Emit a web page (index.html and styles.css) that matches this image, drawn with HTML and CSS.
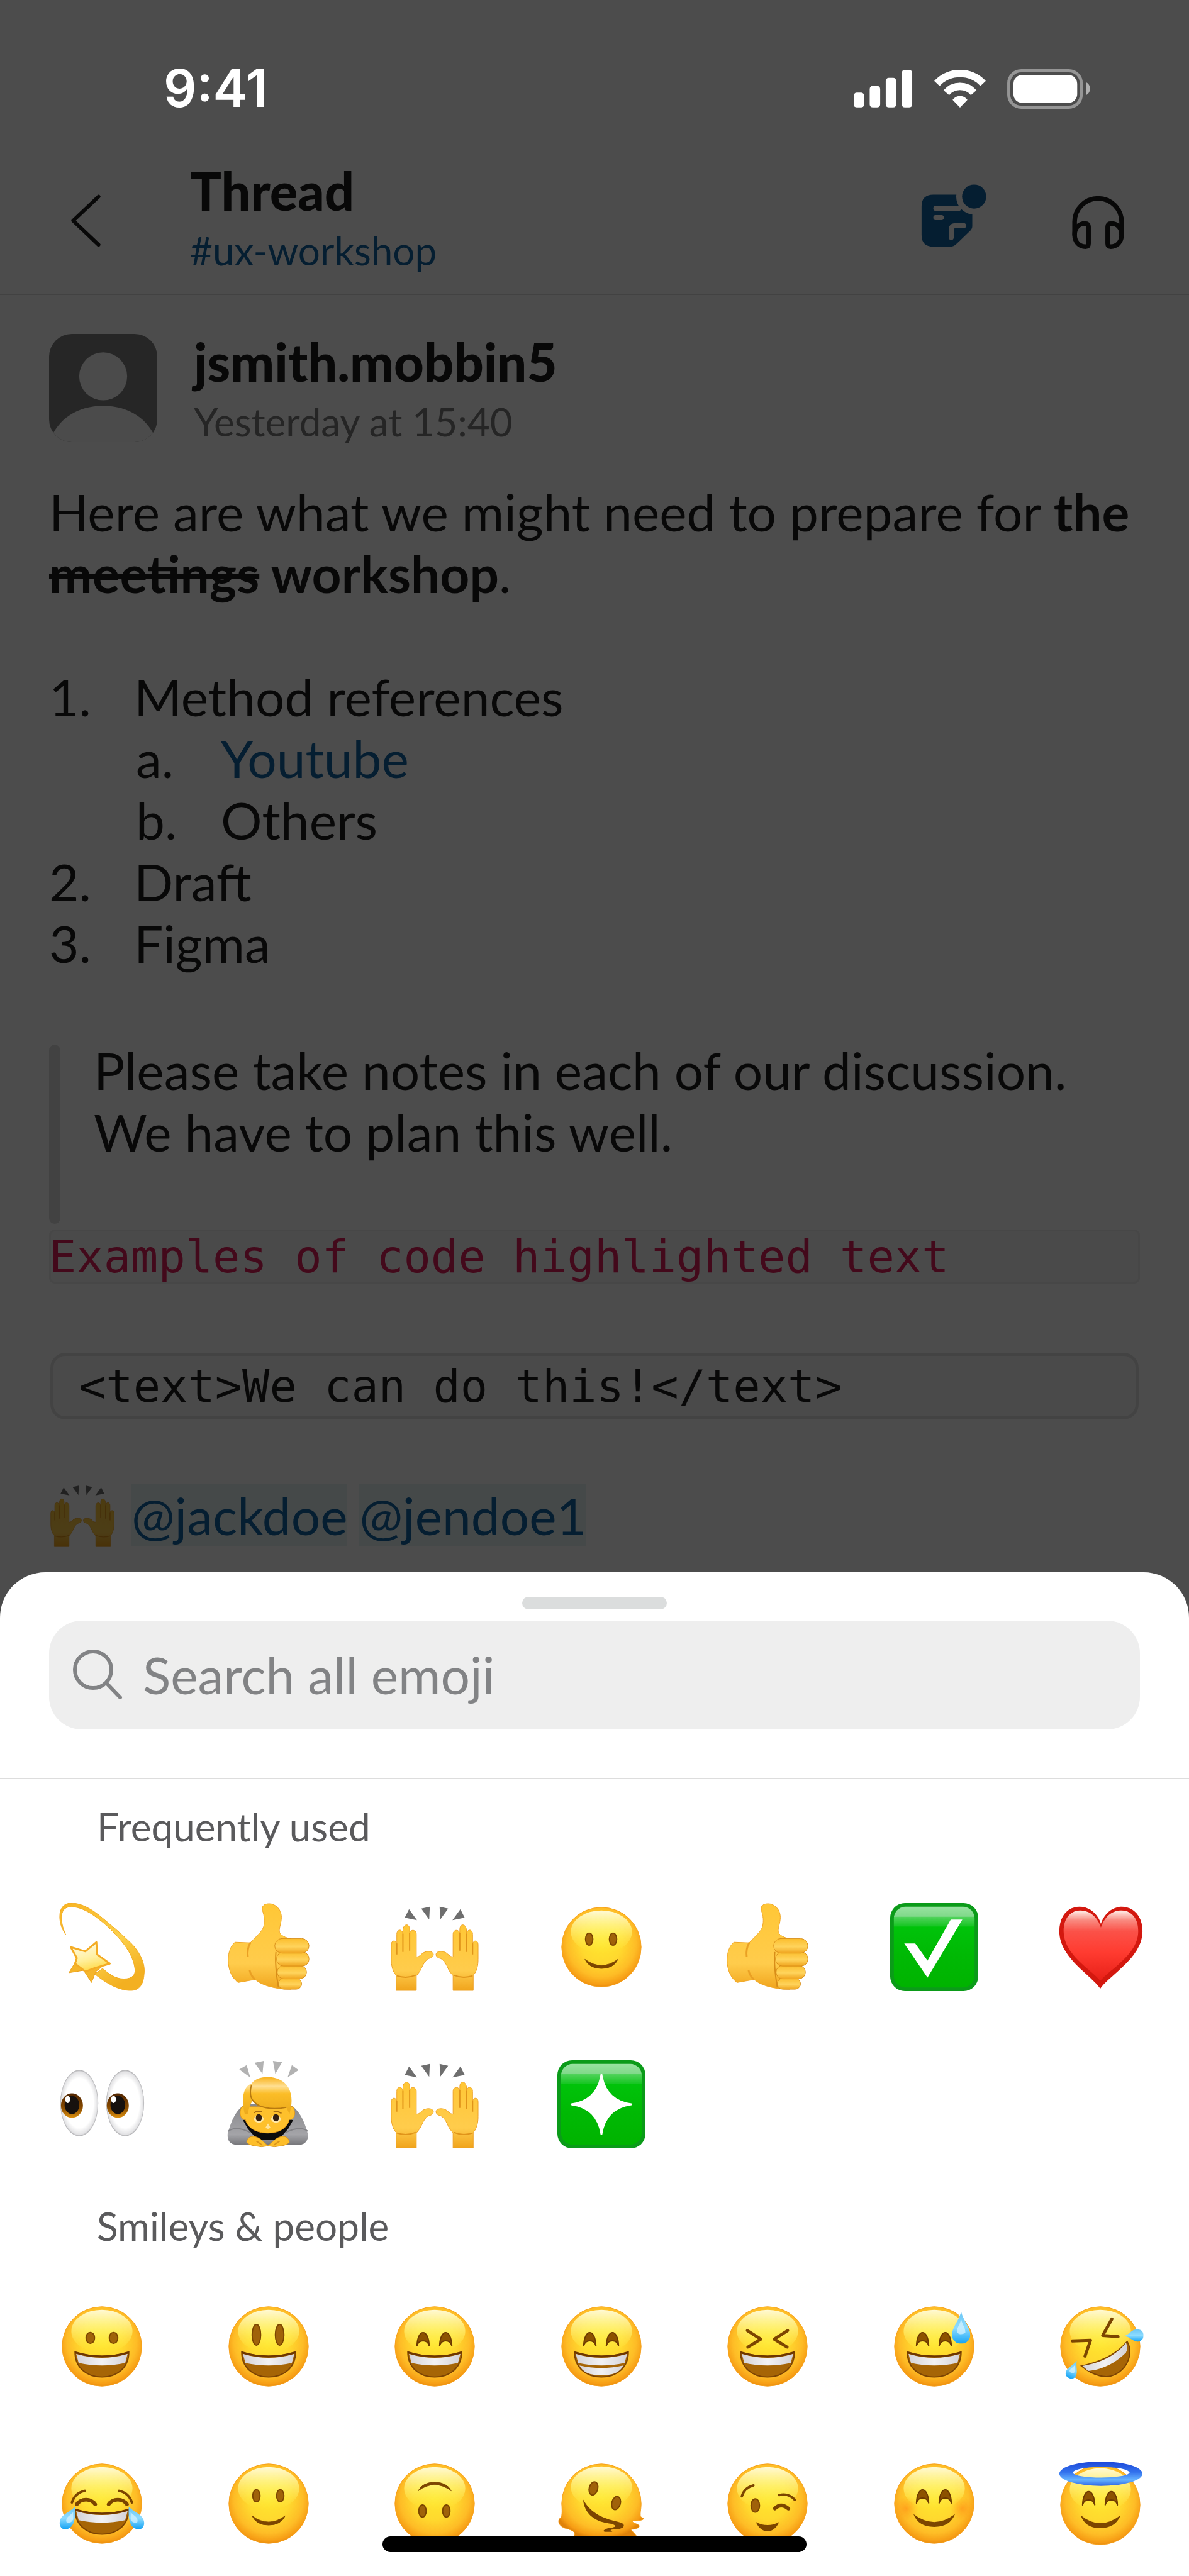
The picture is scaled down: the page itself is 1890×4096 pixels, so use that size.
FILE: index.html
```html
<!DOCTYPE html>
<html lang="en">
<head>
    <meta charset="UTF-8">
    <meta name="viewport" content="width=device-width, initial-scale=1.0">
    <title>Thread</title>
    <link rel="stylesheet" href="styles.css">
</head>
<body>

<!-- Shared emoji artwork -->
<svg class="sprite" aria-hidden="true">
    <defs>
        <radialGradient id="skin" cx="0.5" cy="0.44" r="0.58">
            <stop offset="0" stop-color="#ffe62e"/>
            <stop offset="0.45" stop-color="#ffd92e"/>
            <stop offset="0.75" stop-color="#febc26"/>
            <stop offset="0.92" stop-color="#f69c14"/>
            <stop offset="1" stop-color="#e0820a"/>
        </radialGradient>
        <linearGradient id="gloss" x1="0" y1="0" x2="0" y2="1">
            <stop offset="0" stop-color="#fffde0" stop-opacity="0.95"/>
            <stop offset="0.5" stop-color="#fffa80" stop-opacity="0.6"/>
            <stop offset="1" stop-color="#fff040" stop-opacity="0"/>
        </linearGradient>
        <linearGradient id="teeth" x1="0" y1="0" x2="1" y2="0">
            <stop offset="0" stop-color="#d4d2d6"/>
            <stop offset="0.5" stop-color="#f2f2f4"/>
            <stop offset="1" stop-color="#d4d2d6"/>
        </linearGradient>
        <linearGradient id="water" x1="0" y1="0" x2="0" y2="1">
            <stop offset="0" stop-color="#6cc6f5"/>
            <stop offset="0.5" stop-color="#8edcff"/>
            <stop offset="1" stop-color="#12a2f4"/>
        </linearGradient>
        <radialGradient id="cheek">
            <stop offset="0" stop-color="#ff8a14" stop-opacity="0.6"/>
            <stop offset="1" stop-color="#ff9a14" stop-opacity="0"/>
        </radialGradient>
        <linearGradient id="hand" x1="0" y1="0" x2="0" y2="1">
            <stop offset="0" stop-color="#ffc736"/>
            <stop offset="0.7" stop-color="#ffcc4c"/>
            <stop offset="1" stop-color="#f0a41c"/>
        </linearGradient>
        <linearGradient id="finger" x1="0" y1="0" x2="0" y2="1">
            <stop offset="0" stop-color="#fbbd2c"/>
            <stop offset="0.55" stop-color="#ffd45c"/>
            <stop offset="1" stop-color="#f0a51f"/>
        </linearGradient>
        <linearGradient id="green" x1="0" y1="0" x2="0" y2="1">
            <stop offset="0" stop-color="#98e2a0"/>
            <stop offset="0.12" stop-color="#80d98a"/>
            <stop offset="0.13" stop-color="#4fd25a"/>
            <stop offset="0.24" stop-color="#18c624"/>
            <stop offset="0.25" stop-color="#00c30a"/>
            <stop offset="0.6" stop-color="#00b904"/>
            <stop offset="1" stop-color="#00b300"/>
        </linearGradient>
        <linearGradient id="heart" x1="0" y1="0" x2="0" y2="1">
            <stop offset="0" stop-color="#fff0ea"/>
            <stop offset="0.14" stop-color="#f98a80"/>
            <stop offset="0.3" stop-color="#fb5148"/>
            <stop offset="0.6" stop-color="#ff3b30"/>
            <stop offset="1" stop-color="#e82018"/>
        </linearGradient>
        <linearGradient id="trail" x1="0" y1="0" x2="0.6" y2="1">
            <stop offset="0" stop-color="#f8b422"/>
            <stop offset="0.6" stop-color="#fcd04a"/>
            <stop offset="1" stop-color="#f3b021"/>
        </linearGradient>
        <linearGradient id="star" x1="0.3" y1="0" x2="0.6" y2="1">
            <stop offset="0" stop-color="#fffbe6"/>
            <stop offset="0.55" stop-color="#fff0a0"/>
            <stop offset="1" stop-color="#ffd840"/>
        </linearGradient>
        <linearGradient id="hair" x1="0" y1="0" x2="0" y2="1">
            <stop offset="0" stop-color="#f9b21a"/>
            <stop offset="0.25" stop-color="#ffdf92"/>
            <stop offset="0.45" stop-color="#fbbd27"/>
            <stop offset="1" stop-color="#eba91c"/>
        </linearGradient>
        <linearGradient id="sleeve" x1="0" y1="0" x2="0" y2="1">
            <stop offset="0" stop-color="#88888b"/>
            <stop offset="0.75" stop-color="#a4a4a8"/>
            <stop offset="1" stop-color="#77777b"/>
        </linearGradient>
        <linearGradient id="halo" x1="0" y1="0" x2="0" y2="1">
            <stop offset="0" stop-color="#1c46d8"/>
            <stop offset="0.45" stop-color="#3474ee"/>
            <stop offset="0.75" stop-color="#66b4ff"/>
            <stop offset="1" stop-color="#2c62e4"/>
        </linearGradient>
        <radialGradient id="eyeball">
            <stop offset="0.75" stop-color="#ffffff"/>
            <stop offset="0.95" stop-color="#e2e2e4"/>
            <stop offset="1" stop-color="#a9a9ac"/>
        </radialGradient>
        <linearGradient id="iris" x1="0" y1="0" x2="0" y2="1">
            <stop offset="0" stop-color="#512500"/>
            <stop offset="0.6" stop-color="#8a4c00"/>
            <stop offset="1" stop-color="#dc9010"/>
        </linearGradient>
    </defs>

    <symbol id="face" viewBox="0 0 144 144">
        <circle cx="72" cy="72" r="65" fill="url(#skin)" stroke="#f6a01c" stroke-width="1"/>
        <ellipse cx="72" cy="47" rx="50" ry="35" fill="url(#gloss)"/>
    </symbol>
    <symbol id="mouth-open" viewBox="0 0 144 144">
        <path d="M28 81Q72 95 116 81C116 106 98 122 72 122S28 106 28 81Z" fill="#a66506" stroke="#7c4303" stroke-width="2"/>
        <path d="M30 84Q72 97 114 84L110 99Q72 107 34 99Z" fill="url(#teeth)"/>
        <path d="M28 82Q72 95 116 82" fill="none" stroke="#6d3600" stroke-width="3"/>
    </symbol>
    <symbol id="eyes-smile" viewBox="0 0 144 144">
        <g fill="#8c5200" stroke="#6d3a00" stroke-width="2" stroke-linejoin="round">
            <path d="M43 71C44 42 62 42 63 71C60 60 46 60 43 71Z"/>
            <path d="M80 71C81 42 99 42 100 71C97 60 83 60 80 71Z"/>
        </g>
    </symbol>
    <symbol id="drop" viewBox="0 0 30 52">
        <path d="M15 0C18 14 30 26 30 38A14 14 0 0 1 0 38C0 26 12 14 15 0Z" fill="url(#water)"/>
        <path d="M15 12C17 22 22 26 22 34Q15 40 8 34C8 26 13 22 15 12Z" fill="#d4f2ff" opacity="0.75"/>
    </symbol>
    <symbol id="slight-smile" viewBox="0 0 144 144">
        <use href="#face"/>
        <g fill="#a0620a" stroke="#7c4500" stroke-width="2">
            <ellipse cx="52" cy="59" rx="6" ry="10"/>
            <ellipse cx="91" cy="59" rx="6" ry="10"/>
        </g>
        <path d="M45 92Q72 112 99 92Q92 107 72 107T45 92Z" fill="#7c4500" stroke="#7c4500" stroke-width="1" stroke-linejoin="round"/>
    </symbol>
    <symbol id="palm" viewBox="0 0 144 144">
        <path d="M9 143V118C3 112 1 102 1 92L1 68C1 60 9 60 10 67V51C10 42 19 42 20 50V44C21 33 31 33 31 43V50C32 42 42 43 42 51V88C44 88 47 87 49 85C54 79 62 78 67 80C72 83 70 88 65 90C58 91 54 99 51 105C49 111 45 115 42 119V143Z" fill="url(#hand)" stroke="#eda022" stroke-width="1"/>
        <path d="M10 66V84M20 50V80M31 49V78M10 119Q26 124 41 118" fill="none" stroke="#e0941a" stroke-width="2"/>
        <path d="M30 10L23 24L43 28ZM50 9L64 6L63 27Z" fill="#6e6e6e"/>
    </symbol>
    <symbol id="raised-hands" viewBox="0 0 144 144">
        <use href="#palm"/>
        <use href="#palm" transform="translate(144 0) scale(-1 1)"/>
    </symbol>
    <symbol id="thumbs-up" viewBox="0 0 144 144">
        <path d="M73 1C83 1 93 10 93 23C93 34 88 42 90 48C92 53 100 57 108 58V141C92 141 65 138 50 125L22 130C12 122 6 110 6 93C6 80 10 70 17 64L42 65C52 54 62 46 64 38C66 28 65 22 62 12C60 4 66 1 73 1Z" fill="url(#hand)" stroke="#f0a422" stroke-width="1"/>
        <path d="M42 65C38 72 37 80 38 88M50 125Q43 119 41 110" fill="none" stroke="#eaa024" stroke-width="3"/>
        <g fill="url(#finger)" stroke="#d88d18" stroke-width="1">
            <rect x="88" y="123" width="38" height="18" rx="9"/>
            <rect x="86" y="102" width="48" height="22" rx="11"/>
            <rect x="85" y="80" width="53" height="23" rx="11"/>
            <rect x="82" y="58" width="56" height="24" rx="12"/>
        </g>
        <path d="M84 80C82 100 85 120 88 138" fill="none" stroke="#d88d18" stroke-width="2"/>
    </symbol>
    <symbol id="green-tile" viewBox="0 0 144 144">
        <rect width="144" height="144" rx="24" fill="#0b9b19"/>
        <rect x="6" y="6" width="132" height="132" rx="19" fill="url(#green)"/>
    </symbol>
</svg>

<main class="phone">
    <section class="thread">
        <div class="status-bar">
            <time class="clock">9:41</time>
            <div class="status-icons">
                <svg width="94" height="60" viewBox="0 0 96 61" fill="#fff">
                    <rect x="0" y="37" width="17" height="24" rx="5"/>
                    <rect x="26" y="26" width="17" height="35" rx="5"/>
                    <rect x="52" y="13" width="17" height="48" rx="5"/>
                    <rect x="78" y="0" width="17" height="61" rx="5"/>
                </svg>
                <svg width="82" height="60" viewBox="0 0 83 61" fill="none" stroke="#fff" stroke-width="12">
                    <path d="M4.2 22.1A51.3 51.3 0 0 1 78.8 22.1"/>
                    <path d="M19.4 36.9A29.1 29.1 0 0 1 63.6 36.9"/>
                    <path d="M41.5 61L29.5 48.5C36 40 47 40 53.5 48.5Z" fill="#fff" stroke="none"/>
                </svg>
                <svg width="132" height="63" viewBox="0 0 134 64">
                    <rect x="2.5" y="2.5" width="117" height="59" rx="20" fill="none" stroke="#959595" stroke-width="5"/>
                    <rect x="10" y="9.5" width="103" height="45" rx="14" fill="#fff"/>
                    <path d="M127 21C136 25 136 38 127 42Z" fill="#b0b0b0"/>
                </svg>
            </div>
        </div>

        <header class="thread-header">
            <button class="icon-button" aria-label="Back">
                <svg viewBox="0 0 120 120"><path d="M80 27L39 66L80 105" fill="none" stroke="#1d1c1d" stroke-width="6" stroke-linecap="round" stroke-linejoin="round"/></svg>
            </button>
            <div class="thread-title">
                <h1>Thread</h1>
                <a href="#">#ux-workshop</a>
            </div>
            <div class="thread-actions">
                <button class="icon-button" aria-label="Canvas">
                    <svg viewBox="0 0 120 120">
                        <path d="M27 24H90V75Q90 79 86 83L64 104Q60 108 54 108H27Q8 108 8 89V43Q8 24 27 24Z" fill="#1264a3"/>
                        <circle cx="93" cy="27" r="29" fill="#fff"/>
                        <circle cx="93" cy="27" r="19.5" fill="#1264a3"/>
                        <path d="M31 46H68M31 61H40M56 93V81Q56 74 63 74H76" fill="none" stroke="#fff" stroke-width="8" stroke-linecap="round"/>
                    </svg>
                </button>
                <button class="icon-button" aria-label="Start a huddle">
                    <svg viewBox="0 0 120 120">
                        <g fill="none" stroke="#1d1c1d" stroke-width="7.5">
                            <path d="M21.5 90V68A38 38 0 0 1 97.5 68V90"/>
                            <path d="M21.5 89C21.5 77 29 70.5 38 70.5Q44 70.5 44 76V103Q44 108 39 108C29 108 21.5 100 21.5 89Z"/>
                            <path d="M97.5 89C97.5 77 90 70.5 81 70.5Q75 70.5 75 76V103Q75 108 80 108C90 108 97.5 100 97.5 89Z"/>
                        </g>
                    </svg>
                </button>
            </div>
        </header>

        <article class="message">
            <div class="author">
                <svg class="avatar" viewBox="0 0 176 176">
                    <rect width="176" height="176" fill="#7f7f7f"/>
                    <circle cx="88" cy="69" r="39" fill="#fafafa"/>
                    <path d="M0 176C14 138 46 117 88 117S162 138 176 176Z" fill="#fafafa"/>
                </svg>
                <div>
                    <h2>jsmith.mobbin5</h2>
                    <p class="sent-at">Yesterday at 15:40</p>
                </div>
            </div>

            <p class="text">Here are what we might need to prepare for <b>the <s>meetings</s> workshop</b>.</p>

            <ol class="list">
                <li>Method references
                    <ol class="sublist">
                        <li><a href="#">Youtube</a></li>
                        <li>Others</li>
                    </ol>
                </li>
                <li>Draft</li>
                <li>Figma</li>
            </ol>

            <blockquote>Please take notes in each of our discussion.<br>We have to plan this well.</blockquote>

            <code class="inline-code">Examples of code highlighted text</code>

            <pre class="code-block">&lt;text&gt;We can do this!&lt;/text&gt;</pre>

            <div class="mentions">
                <svg class="emoji-inline" viewBox="0 0 144 144"><use href="#raised-hands"/></svg>
                <a href="#">@jackdoe</a>
                <a href="#">@jendoe1</a>
            </div>
        </article>
    </section>

    <section class="sheet">
        <div class="handle"></div>
        <label class="search">
            <svg viewBox="0 0 80 80" fill="none" stroke="#828385" stroke-width="6" stroke-linecap="round">
                <circle cx="33" cy="33" r="29"/>
                <path d="M54 54L76 77"/>
            </svg>
            <input type="text" placeholder="Search all emoji" aria-label="Search all emoji">
        </label>

        <div class="picker">
            <h3>Frequently used</h3>
            <div class="emoji-grid">
                <button aria-label="dizzy">
                    <svg viewBox="0 0 144 144">
                        <path d="M13 52C6 42 3 32 3 22C3 8 10 0 22 0C38 0 54 9 70 22C92 40 110 56 122 68C136 84 143 100 141 116C140 132 134 143 119 143C98 143 78 130 60 116L73 107C84 116 94 124 108 124C122 124 127 117 126 108C124 90 114 74 102 60C92 48 80 36 65 25C50 13 34 6 22 6C10 6 6 14 6 24C6 34 9 43 13 52Z" fill="url(#trail)" stroke="#f2a81c" stroke-width="1"/>
                        <path d="M29 96L18 114L42 110L55 130L62 112L80 98L62 90Z" fill="#f5b52a" stroke="#e9a01c" stroke-width="1" stroke-linejoin="round"/>
                        <path d="M63 64L64 84L85 99L61 106L45 112L28 99L31 90L21 72L45 79Z" fill="url(#star)" stroke="#f4ac24" stroke-width="3" stroke-linejoin="round"/>
                    </svg>
                </button>
                <button aria-label="thumbs up"><svg viewBox="0 0 144 144"><use href="#thumbs-up"/></svg></button>
                <button aria-label="raised hands"><svg viewBox="0 0 144 144"><use href="#raised-hands"/></svg></button>
                <button aria-label="slightly smiling face"><svg viewBox="0 0 144 144"><use href="#slight-smile"/></svg></button>
                <button aria-label="thumbs up"><svg viewBox="0 0 144 144"><use href="#thumbs-up"/></svg></button>
                <button aria-label="check mark">
                    <svg viewBox="0 0 144 144">
                        <use href="#green-tile"/>
                        <path d="M23 66H41L61 94L99 27H118L61 122Z" fill="#fff"/>
                    </svg>
                </button>
                <button aria-label="heart">
                    <svg viewBox="0 0 144 144">
                        <path d="M72 140C58 118 5 90 5 46C5 20 20 6 38 6C55 6 68 18 73 34C78 18 91 6 107 6C125 6 141 20 141 46C141 90 86 118 72 140Z" fill="#d3180f"/>
                        <path d="M72 127C56 108 12 84 12 46C12 24 24 12 39 12C56 12 68 24 73 40C78 24 90 12 107 12C122 12 134 24 134 46C134 84 88 108 72 127Z" fill="url(#heart)"/>
                    </svg>
                </button>
                <button aria-label="eyes">
                    <svg viewBox="0 0 144 144">
                        <g id="eye">
                            <ellipse cx="35" cy="70" rx="31" ry="54" fill="url(#eyeball)"/>
                            <ellipse cx="23" cy="74" rx="18" ry="20" fill="url(#iris)"/>
                            <ellipse cx="23" cy="73" rx="12" ry="15" fill="#17110e"/>
                            <ellipse cx="16" cy="64" rx="4" ry="6" fill="#fff"/>
                        </g>
                        <use href="#eye" x="75"/>
                    </svg>
                </button>
                <button aria-label="bowing">
                    <svg viewBox="0 0 144 144">
                        <path d="M24 15L36 8L42 28ZM49 4L64 1L62 22ZM79 1L94 3L83 22ZM110 8L121 16L103 28Z" fill="#b2b2b2"/>
                        <path d="M34 72C16 82 10 104 5 120C4 132 10 138 20 138H122C132 138 138 130 136 120C132 104 124 82 106 72Z" fill="url(#sleeve)"/>
                        <path d="M30 98L46 94H96L112 98L104 112L88 130H54L38 112Z" fill="#0b0b0c"/>
                        <path d="M6 116C16 108 30 112 42 118M136 116C126 108 112 112 100 118" fill="none" stroke="#828286" stroke-width="2"/>
                        <path d="M28 76C22 88 28 98 34 97C38 112 54 119 71 119S102 112 106 97C113 98 118 88 112 76Z" fill="#fec02c" stroke="#e29a18" stroke-width="1"/>
                        <path d="M33 88C28 68 28 44 44 38C56 22 92 24 104 44C112 58 110 74 106 88L101 77C80 83 56 78 46 66Q40 74 38 88Z" fill="url(#hair)"/>
                        <path d="M44 40C40 56 42 66 56 74Q74 82 101 77" fill="none" stroke="#b87a10" stroke-width="2"/>
                        <ellipse cx="56" cy="96" rx="8" ry="6" fill="#ffe9a8"/>
                        <ellipse cx="84" cy="96" rx="8" ry="6" fill="#ffe9a8"/>
                        <ellipse cx="56" cy="94" rx="5" ry="6" fill="#352012"/>
                        <ellipse cx="84" cy="94" rx="5" ry="6" fill="#352012"/>
                        <path d="M48 86Q53 82 61 84M80 84Q88 83 93 87" fill="none" stroke="#a86c10" stroke-width="2"/>
                        <path d="M71 103L67 110Q71 114 75 110Z" fill="#ffe39a"/>
                        <path d="M36 134C38 122 50 122 60 130L71 140Q60 143 50 140Q40 139 36 134ZM106 134C104 122 92 122 82 130L71 140Q82 143 92 140Q102 139 106 134Z" fill="#fdbe2a" stroke="#d9941a" stroke-width="1"/>
                        <path d="M52 132L62 139M90 132L80 139" stroke="#d9941a" stroke-width="2"/>
                    </svg>
                </button>
                <button aria-label="raised hands"><svg viewBox="0 0 144 144"><use href="#raised-hands"/></svg></button>
                <button aria-label="sparkle">
                    <svg viewBox="0 0 144 144">
                        <use href="#green-tile"/>
                        <path d="M72 23C76 50 92 68 121 72C92 76 76 94 72 121C68 94 52 76 23 72C52 68 68 50 72 23Z" fill="#fff" stroke="#fff" stroke-width="3" stroke-linejoin="round"/>
                    </svg>
                </button>
            </div>

            <h3>Smileys &amp; people</h3>
            <div class="emoji-grid">
                <button aria-label="grinning">
                    <svg viewBox="0 0 144 144">
                        <use href="#face"/>
                        <use href="#mouth-open"/>
                        <g fill="#a0620a" stroke="#7c4500" stroke-width="2">
                            <ellipse cx="53" cy="58" rx="7" ry="9"/>
                            <ellipse cx="91" cy="58" rx="7" ry="9"/>
                        </g>
                    </svg>
                </button>
                <button aria-label="smiley">
                    <svg viewBox="0 0 144 144">
                        <use href="#face"/>
                        <use href="#mouth-open"/>
                        <g fill="#a0620a" stroke="#7c4500" stroke-width="2">
                            <ellipse cx="52" cy="53" rx="7" ry="17"/>
                            <ellipse cx="90" cy="53" rx="7" ry="17"/>
                        </g>
                    </svg>
                </button>
                <button aria-label="smile">
                    <svg viewBox="0 0 144 144">
                        <use href="#face"/>
                        <use href="#mouth-open"/>
                        <use href="#eyes-smile"/>
                    </svg>
                </button>
                <button aria-label="grin">
                    <svg viewBox="0 0 144 144">
                        <use href="#face"/>
                        <use href="#mouth-open"/>
                        <path d="M36 103Q72 111 108 103C102 115 90 119 72 119S42 115 36 103Z" fill="url(#teeth)"/>
                        <use href="#eyes-smile"/>
                    </svg>
                </button>
                <button aria-label="laughing">
                    <svg viewBox="0 0 144 144">
                        <use href="#face"/>
                        <use href="#mouth-open"/>
                        <path d="M39 46L61 60L40 73M105 46L83 60L104 73" fill="none" stroke="#7c4500" stroke-width="5" stroke-linecap="round" stroke-linejoin="round"/>
                    </svg>
                </button>
                <button aria-label="sweat smile">
                    <svg viewBox="0 0 144 144">
                        <use href="#face"/>
                        <use href="#mouth-open"/>
                        <use href="#eyes-smile"/>
                        <use href="#drop" x="101" y="15" width="30" height="52"/>
                    </svg>
                </button>
                <button aria-label="rolling on the floor laughing">
                    <svg viewBox="0 0 144 144">
                        <use href="#face"/>
                        <path d="M116 64C126 82 118 106 98 117C82 126 60 120 41 104C70 98 98 86 116 64Z" fill="#a66506" stroke="#7c4303" stroke-width="2"/>
                        <path d="M114 66Q118 74 114 82C98 98 76 110 52 112L43 104C72 99 98 87 114 66Z" fill="url(#teeth)"/>
                        <path d="M91 27L76 54L101 56M26 63L56 62L47 88" fill="none" stroke="#7c4500" stroke-width="5" stroke-linecap="round" stroke-linejoin="round"/>
                        <use href="#drop" x="17" y="94" width="20" height="31" transform="rotate(24 27 110)"/>
                        <path d="M112 55C122 50 124 44 132 44C141 44 144 50 142 58C139 65 130 65 126 62C121 59 118 56 112 55Z" fill="url(#water)"/>
                    </svg>
                </button>
                <button aria-label="joy">
                    <svg viewBox="0 0 144 144">
                        <use href="#face"/>
                        <use href="#mouth-open"/>
                        <g fill="none" stroke="#7c4500" stroke-linecap="round">
                            <path d="M23 70Q28 54 44 51M121 70Q116 54 100 51" stroke-width="4"/>
                            <path d="M31 73C38 63 54 63 61 73M83 73C90 63 106 63 113 73" stroke-width="6"/>
                        </g>
                        <path d="M28 77C20 86 4 90 3 102C2 112 10 116 17 113C28 109 29 92 28 77Z" fill="url(#water)"/>
                        <path d="M116 77C124 86 140 90 141 102C142 112 134 116 127 113C116 109 115 92 116 77Z" fill="url(#water)"/>
                        <path d="M25 86C20 92 12 94 14 102Q20 106 25 98ZM119 86C124 92 132 94 130 102Q124 106 119 98Z" fill="#d4f2ff" opacity="0.75"/>
                    </svg>
                </button>
                <button aria-label="slightly smiling face"><svg viewBox="0 0 144 144"><use href="#slight-smile"/></svg></button>
                <button aria-label="upside-down face">
                    <svg viewBox="0 0 144 144">
                        <use href="#face"/>
                        <g fill="#a0620a" stroke="#7c4500" stroke-width="2">
                            <ellipse cx="52" cy="84" rx="6" ry="10"/>
                            <ellipse cx="91" cy="84" rx="6" ry="10"/>
                        </g>
                        <path d="M45 51Q72 31 99 51Q92 37 72 37T45 51Z" fill="#7c4500" stroke="#7c4500" stroke-width="1" stroke-linejoin="round"/>
                    </svg>
                </button>
                <button aria-label="melting face">
                    <svg viewBox="0 0 144 144">
                        <path d="M7 72A65 65 0 0 1 137 72C137 86 132 94 141 96Q142 100 122 100C124 106 134 104 134 109Q132 114 120 114L132 128H24C36 118 20 114 12 112C2 108 0 100 4 96C8 94 8 86 7 72Z" fill="url(#skin)" stroke="#f6a01c" stroke-width="1"/>
                        <ellipse cx="72" cy="45" rx="50" ry="34" fill="url(#gloss)"/>
                        <g fill="#a0620a" stroke="#7c4500" stroke-width="2">
                            <ellipse cx="59" cy="47" rx="7" ry="11" transform="rotate(15 59 47)"/>
                            <ellipse cx="96" cy="71" rx="7" ry="11" transform="rotate(15 96 71)"/>
                        </g>
                        <path d="M42 65C44 88 60 100 82 104C96 106 98 110 90 111C78 112 72 117 78 118L90 118C84 115 88 114 96 114C110 113 112 106 104 103C86 98 58 94 42 65Z" fill="#7c4500"/>
                    </svg>
                </button>
                <button aria-label="wink">
                    <svg viewBox="0 0 144 144">
                        <use href="#face"/>
                        <ellipse cx="52" cy="75" rx="7" ry="11" fill="#a0620a" stroke="#7c4500" stroke-width="2"/>
                        <g fill="none" stroke="#7c4500" stroke-linecap="round">
                            <path d="M30 60Q34 46 49 42M91 58Q106 54 117 66" stroke-width="4"/>
                            <path d="M84 80Q94 70 106 80" stroke-width="6"/>
                        </g>
                        <path d="M53 102Q72 112 91 102Q84 117 72 117T53 102Z" fill="#7c4500"/>
                    </svg>
                </button>
                <button aria-label="blush">
                    <svg viewBox="0 0 144 144">
                        <use href="#face"/>
                        <circle cx="26" cy="80" r="20" fill="url(#cheek)"/>
                        <circle cx="118" cy="80" r="20" fill="url(#cheek)"/>
                        <use href="#eyes-smile"/>
                        <path d="M38 89Q72 115 106 89Q98 110 72 110T38 89Z" fill="#7c4500"/>
                    </svg>
                </button>
                <button aria-label="innocent">
                    <svg viewBox="0 0 144 144">
                        <use href="#face" y="2"/>
                        <use href="#eyes-smile" y="3"/>
                        <path d="M40 91Q72 117 105 91Q97 112 72 112T40 91Z" fill="#7c4500"/>
                        <path d="M5 23A68 20 0 0 1 141 23A68 20 0 0 1 5 23ZM27 21C30 32 116 32 120 21C114 9 32 9 27 21Z" fill="url(#halo)" fill-rule="evenodd"/>
                    </svg>
                </button>
            </div>
        </div>
        <div class="home-indicator"></div>
    </section>
</main>

</body>
</html>
```

FILE: styles.css
```css
* {
    box-sizing: border-box;
}
body {
    margin: 0;
    font-family: Lato, "Liberation Sans", sans-serif;
    font-size: 82px;
    line-height: 98px;
    color: #1d1c1d;
    background-color: #ffffff;
}
h1, h2, h3, p, ol, pre, blockquote {
    margin: 0;
    padding: 0;
}
a {
    color: #1264a3;
    text-decoration: none;
}
button {
    padding: 0;
    border: none;
    background: none;
    cursor: pointer;
}
svg {
    display: block;
}
.sprite {
    position: absolute;
    width: 0;
    height: 0;
}
.phone {
    display: flex;
    flex-direction: column;
    min-height: 100vh;
}

/* Thread, dimmed while the emoji sheet is open */
.thread {
    position: relative;
    padding-bottom: 120px;
}
.thread::after {
    content: "";
    position: absolute;
    inset: 0;
    background-color: rgba(0, 0, 0, 0.7);
}
.status-bar {
    position: relative;
    z-index: 1;
    display: flex;
    align-items: center;
    justify-content: space-between;
    padding: 92px 157px 0 260px;
    color: #ffffff;
}
.clock {
    font-family: Inter, sans-serif;
    font-weight: 600;
}
.status-icons {
    display: flex;
    align-items: center;
    gap: 34px;
}
.thread-header {
    display: flex;
    align-items: center;
    padding: 64px 85px 31px 78px;
    border-bottom: 2px solid #dddddd;
}
.icon-button svg {
    width: 118px;
    height: 118px;
}
.thread-title {
    flex: 1;
    margin-left: 106px;
}
.thread-title h1,
.author h2 {
    font-size: 83px;
    font-weight: 900;
}
.thread-title a,
.sent-at {
    display: block;
    margin-top: 8px;
    font-size: 62px;
    line-height: 76px;
}
.thread-actions {
    display: flex;
    gap: 112px;
}

.message {
    padding: 57px 78px 0;
}
.author {
    display: flex;
    align-items: center;
    gap: 58px;
    margin-bottom: 56px;
}
.avatar {
    width: 172px;
    height: 172px;
    border-radius: 36px;
}
.sent-at {
    color: #7c7c7c;
}
.list {
    margin-top: 98px;
    list-style: none;
    counter-reset: item;
}
.list li {
    counter-increment: item;
}
.list li::before {
    content: counter(item) ".";
    display: inline-block;
    width: 135px;
}
.sublist {
    padding-left: 138px;
    list-style: none;
    counter-reset: sub;
}
.sublist li {
    counter-increment: sub;
}
.sublist li::before {
    content: counter(sub, lower-alpha) ".";
}
blockquote {
    position: relative;
    min-height: 294px;
    margin-top: 104px;
    padding-left: 71px;
}
blockquote::before {
    content: "";
    position: absolute;
    inset: 9px auto 0 0;
    width: 18px;
    border-radius: 9px;
    background-color: #dddddd;
}
.inline-code,
.code-block {
    font-family: "DejaVu Sans Mono", monospace;
    font-size: 72px;
}
.inline-code {
    display: block;
    margin-top: 9px;
    border-radius: 9px;
    box-shadow: inset 0 0 0 3px #eeeeee;
    line-height: 86px;
    color: #e01e5a;
    background-color: #f8f8f8;
}
.code-block {
    margin: 110px 2px 0;
    padding: 6px 40px;
    border: 5px solid #e2e2e2;
    border-radius: 24px;
    line-height: 84px;
    background-color: #f8f8f8;
}
.mentions {
    display: flex;
    align-items: center;
    gap: 19px;
    margin-top: 101px;
}
.mentions a {
    background-color: #e8f3f3;
}
.emoji-inline {
    width: 102px;
    height: 102px;
    margin: 0 8px 0 2px;
}

/* Emoji sheet */
.sheet {
    position: relative;
    flex: 1;
    margin-top: -80px;
    padding-top: 39px;
    border-radius: 72px 72px 0 0;
    background-color: #ffffff;
}
.handle {
    width: 230px;
    height: 20px;
    margin: 0 auto 18px;
    border-radius: 10px;
    background-color: #dbdddd;
}
.search {
    display: flex;
    align-items: center;
    gap: 32px;
    height: 173px;
    margin: 0 78px;
    padding: 0 37px 3px;
    border-radius: 52px;
    background-color: #eeeeee;
}
.search svg {
    width: 80px;
    height: 80px;
}
.search input {
    flex: 1;
    min-width: 0;
    padding: 0;
    border: none;
    outline: none;
    background: none;
    font: inherit;
    color: #1d1c1d;
}
.search input::placeholder {
    color: #828385;
    opacity: 1;
}
.picker {
    margin-top: 77px;
    padding-top: 37px;
    border-top: 2px solid #dddddd;
}
.picker h3 {
    padding-left: 154px;
    font-size: 62px;
    font-weight: 400;
    line-height: 76px;
    color: #5a5a5c;
}
.emoji-grid {
    display: grid;
    grid-template-columns: repeat(7, 140px);
    justify-content: space-between;
    row-gap: 110px;
    padding: 84px 71px 85px 92px;
}
.emoji-grid svg {
    width: 140px;
    height: 140px;
}
.emoji-grid:last-child {
    padding-bottom: 43px;
}
.home-indicator {
    position: absolute;
    bottom: 38px;
    left: 50%;
    width: 674px;
    height: 25px;
    margin-left: -337px;
    border-radius: 13px;
    background-color: #000000;
}
```
